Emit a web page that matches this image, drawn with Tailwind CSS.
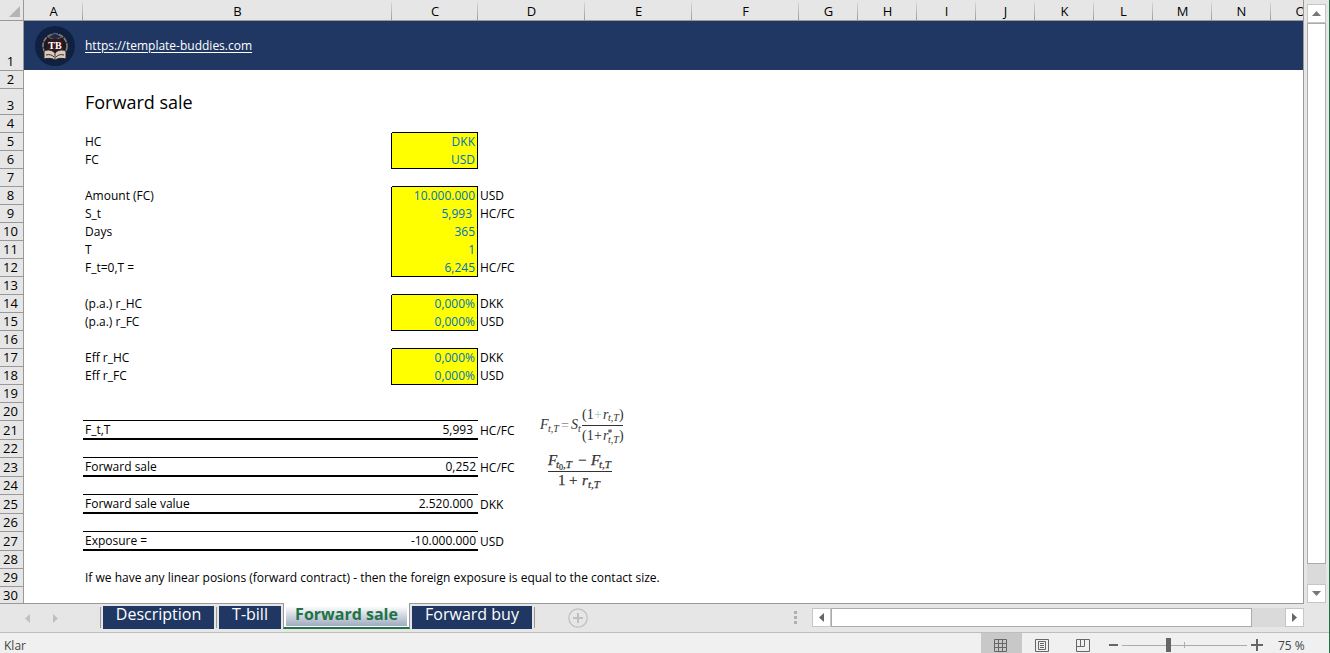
<!DOCTYPE html>
<html lang="da">
<head>
    <meta charset="UTF-8">
    <meta name="viewport" content="width=device-width, initial-scale=1.0">
    <title>Forward sale</title>
    <script src="https://cdn.jsdelivr.net/npm/@tailwindcss/browser@4"></script>
</head>
<body class="h-screen flex flex-col overflow-hidden bg-[#e6e6e6] border-r border-[#217346] font-['Open_Sans',sans-serif] text-black select-none">

    <div class="flex-1 min-h-0 flex">
        <!-- sheet -->
        <main class="relative flex-1 min-w-0 overflow-hidden bg-white border-r border-[#999]">
            <table class="table-fixed w-full min-w-[1330px] border-separate border-spacing-0 text-[12px] leading-4 whitespace-nowrap [&_th]:font-normal [&_th]:text-[13px] [&_th]:bg-[#e6e6e6] [&_th]:p-0 [&_th]:border-[#999] [&_tbody_th]:border-r [&_tbody_th]:border-b [&_tbody_th]:pr-[2px] [&_tbody_th]:pb-px [&_tbody_th]:align-bottom [&_thead_th]:border-b [&_thead_th]:pt-px [&_td]:px-[2px] [&_td]:pt-0 [&_td]:border-black [&_td]:align-bottom">
                <colgroup>
                    <col class="w-[24px]"><col class="w-[59px]"><col class="w-[309px]"><col class="w-[86px]">
                    <col class="w-[107px]"><col class="w-[107px]"><col class="w-[107px]">
                    <col span="8" class="w-[59px]"><col>
                </colgroup>
                <thead>
                    <tr class="h-[21px] [&>th+th]:bg-[linear-gradient(to_bottom,#d8d8d8,#999)] [&>th+th]:bg-[length:1px_19px] [&>th+th]:bg-[position:right_2px] [&>th+th]:bg-no-repeat">
                        <th class="border-r"><svg class="ml-[9px] mt-px w-[11px] h-[11px]" viewBox="0 0 11 11"><path d="M11 0v11H0z" fill="#b4b4b4"/></svg></th>
                        <th>A</th><th>B</th><th>C</th><th>D</th><th>E</th><th>F</th><th>G</th><th>H</th><th>I</th><th>J</th><th>K</th><th>L</th><th>M</th><th>N</th><th>O</th>
                    </tr>
                </thead>
                <tbody>
                    <tr class="h-[50px] [&>td]:bg-[#203764] [&>td]:border-b [&>td]:border-white!">
                        <th>1</th>
                        <td>
                            <svg class="ml-[9px] mb-1 w-10 h-10" viewBox="0 0 40 40">
                                <circle cx="20" cy="20" r="20" fill="#0f2040"/>
                                <circle cx="20" cy="20" r="12" fill="#161a26" stroke="#8d7f70" stroke-width="1.6" stroke-dasharray="5 1"/>
                                <path d="M13 11l7-4 7 4-7 3z" fill="#1b2c4c" stroke="#6b6663"/>
                                <path d="M12 13h16v12H12z" fill="#35161b"/>
                                <path d="M9 25c4-2 8-1 11 2 3-3 7-4 11-2v8c-4-1-8-1-11 1-3-2-7-2-11-1z" fill="#d8cbbb" stroke="#2b2425"/>
                                <path d="M20 27v6M11 29c4-1 6 0 8 2M29 29c-4-1-6 0-8 2" stroke="#3b302c" fill="none"/>
                                <text x="20" y="23" text-anchor="middle" font-family="Liberation Serif" font-weight="bold" font-size="10" fill="#fff">TB</text>
                            </svg>
                        </td>
                        <td colspan="14" class="align-middle!"><a href="https://template-buddies.com" class="text-white underline underline-offset-2">https://template-buddies.com</a></td>
                    </tr>
                    <tr class="h-[18px]"><th>2</th></tr>
                    <tr class="h-[26px]"><th>3</th><td></td><td class="text-[18px] leading-6 pb-px">Forward sale</td></tr>
                    <tr class="h-[18px]"><th>4</th><td></td><td></td><td class="border-b"></td></tr>
                    <tr class="h-[18px]"><th>5</th><td></td><td class="border-r pb-px">HC</td><td class="border-r pb-px bg-[#ff0] text-right text-[#0070c0]">DKK</td></tr>
                    <tr class="h-[18px]"><th>6</th><td></td><td class="border-r pb-px">FC</td><td class="border-r border-b bg-[#ff0] text-right text-[#0070c0]">USD</td></tr>
                    <tr class="h-[18px]"><th>7</th><td></td><td></td><td class="border-b"></td></tr>
                    <tr class="h-[18px]"><th>8</th><td></td><td class="border-r pb-px">Amount (FC)</td><td class="border-r pb-px bg-[#ff0] text-right text-[#0070c0]">10.000.000</td><td class="pb-px">USD</td></tr>
                    <tr class="h-[18px]"><th>9</th><td></td><td class="border-r pb-px">S_t</td><td class="border-r pb-px bg-[#ff0] text-right text-[#0070c0] pr-[5px]!">5,993</td><td class="pb-px">HC/FC</td></tr>
                    <tr class="h-[18px]"><th>10</th><td></td><td class="border-r pb-px">Days</td><td class="border-r pb-px bg-[#ff0] text-right text-[#0070c0]">365</td></tr>
                    <tr class="h-[18px]"><th>11</th><td></td><td class="border-r pb-px">T</td><td class="border-r pb-px bg-[#ff0] text-right text-[#0070c0]">1</td></tr>
                    <tr class="h-[18px]"><th>12</th><td></td><td class="border-r pb-px">F_t=0,T =</td><td class="border-r border-b bg-[#ff0] text-right text-[#0070c0]">6,245</td><td class="pb-px">HC/FC</td></tr>
                    <tr class="h-[18px]"><th>13</th><td></td><td></td><td class="border-b"></td></tr>
                    <tr class="h-[18px]"><th>14</th><td></td><td class="border-r pb-px">(p.a.) r_HC</td><td class="border-r pb-px bg-[#ff0] text-right text-[#0070c0]">0,000%</td><td class="pb-px">DKK</td></tr>
                    <tr class="h-[18px]"><th>15</th><td></td><td class="border-r pb-px">(p.a.) r_FC</td><td class="border-r border-b bg-[#ff0] text-right text-[#0070c0]">0,000%</td><td class="pb-px">USD</td></tr>
                    <tr class="h-[18px]"><th>16</th><td></td><td></td><td class="border-b"></td></tr>
                    <tr class="h-[18px]"><th>17</th><td></td><td class="border-r pb-px">Eff r_HC</td><td class="border-r pb-px bg-[#ff0] text-right text-[#0070c0]">0,000%</td><td class="pb-px">DKK</td></tr>
                    <tr class="h-[18px]"><th>18</th><td></td><td class="border-r pb-px">Eff r_FC</td><td class="border-r border-b bg-[#ff0] text-right text-[#0070c0]">0,000%</td><td class="pb-px">USD</td></tr>
                    <tr class="h-[18px]"><th>19</th></tr>
                    <tr class="h-[18px]"><th>20</th><td></td><td class="border-b"></td><td class="border-b"></td></tr>
                    <tr class="h-[19px]"><th>21</th><td></td><td class="border-b-2">F_t,T</td><td class="border-b-2 text-right pr-[5px]!">5,993</td><td class="pb-px">HC/FC</td></tr>
                    <tr class="h-[18px]"><th>22</th><td></td><td class="border-b"></td><td class="border-b"></td></tr>
                    <tr class="h-[19px]"><th>23</th><td></td><td class="border-b-2">Forward sale</td><td class="border-b-2 text-right">0,252</td><td class="pb-px">HC/FC</td></tr>
                    <tr class="h-[18px]"><th>24</th><td></td><td class="border-b"></td><td class="border-b"></td></tr>
                    <tr class="h-[19px]"><th>25</th><td></td><td class="border-b-2">Forward sale value</td><td class="border-b-2 text-right pr-[5px]!">2.520.000</td><td class="pb-px">DKK</td></tr>
                    <tr class="h-[18px]"><th>26</th><td></td><td class="border-b"></td><td class="border-b"></td></tr>
                    <tr class="h-[19px]"><th>27</th><td></td><td class="border-b-2">Exposure =</td><td class="border-b-2 text-right">-10.000.000</td><td class="pb-px">USD</td></tr>
                    <tr class="h-[18px]"><th>28</th></tr>
                    <tr class="h-[18px]"><th>29</th><td></td><td colspan="8" class="pb-px">If we have any linear posions (forward contract) - then the foreign exposure is equal to the contact size.</td></tr>
                    <tr class="h-[18px]"><th>30</th></tr>
                </tbody>
            </table>

            <!-- formulas floating over the cells -->
            <svg class="absolute left-[538px] top-[404px] w-[90px] h-[88px]" viewBox="0 0 90 88" font-family="Liberation Serif, serif" font-style="italic" fill="#333">
                <g font-size="14">
                    <text x="2" y="25">F</text><text x="10" y="28" font-size="10">t,T</text>
                    <text x="23" y="26" font-style="normal" fill="#888">=</text>
                    <text x="33" y="25">S</text><text x="40" y="28" font-size="10">t</text>
                    <text x="44" y="15" font-style="normal">(1</text><text x="56" y="15" font-style="normal" fill="#9fcfd3">+</text><text x="65" y="15">r</text><text x="70" y="17" font-size="10">t,T</text><text x="81" y="15" font-style="normal">)</text>
                    <text x="44" y="36" font-style="normal">(1</text><text x="56" y="36" font-style="normal">+</text><text x="65" y="36">r</text><path d="M72 25v4M70 26l4 2M74 26l-4 2" stroke="#333" stroke-width=".7"/><text x="70" y="39" font-size="10">t,T</text><text x="81" y="36" font-style="normal">)</text>
                    <path d="M44 21.5h41" stroke="#333"/>
                </g>
                <g font-size="15" stroke="#333" stroke-width=".25">
                    <text x="10" y="61">F</text><text x="18" y="64" font-size="11">t</text><text x="21" y="66" font-size="8" font-style="normal">0</text><text x="25" y="64" font-size="11">,T</text>
                    <text x="40" y="61" font-style="normal">−</text>
                    <text x="53" y="61">F</text><text x="61" y="64" font-size="11">t,T</text>
                    <path d="M10 67.5h64" stroke-width="1"/>
                    <text x="20" y="81" font-style="normal">1</text><text x="31" y="81" font-style="normal">+</text><text x="44" y="81">r</text><text x="50" y="84" font-size="11">t,T</text>
                </g>
            </svg>
        </main>

        <!-- vertical scroll bar -->
        <div class="w-[25px] pl-[3px] pr-[3px] pt-1 flex flex-col bg-[#e6e6e6]">
            <button type="button" aria-label="Scroll up" class="h-[19px] flex items-center justify-center bg-white border border-[#c6c6c6]"><svg class="w-[9px] h-[5px]" viewBox="0 0 9 5"><path d="M4.500 0L9 5H0z" fill="#777"/></svg></button>
            <div class="flex-1 bg-[#dadada] pb-5"><div class="h-full bg-white border border-[#ababab]"></div></div>
            <button type="button" aria-label="Scroll down" class="h-[19px] flex items-center justify-center bg-white border border-[#c6c6c6]"><svg class="w-[9px] h-[5px]" viewBox="0 0 9 5"><path d="M0 0h9L4.500 5z" fill="#777"/></svg></button>
        </div>
    </div>

    <!-- sheet tabs -->
    <div class="h-[29px] flex items-start">
        <div class="h-[26px] w-[283px] flex items-start border-t border-[#999] text-[16px] text-white">
            <div class="w-[100px] h-full pt-1 pl-6 flex items-center gap-[23px]">
                <svg class="w-[6px] h-[9px]" viewBox="0 0 6 9"><path d="M6 0v9L1 4.500z" fill="#c0c0c0"/></svg>
                <svg class="w-[6px] h-[9px]" viewBox="0 0 6 9"><path d="M0 0v9l5-4.500z" fill="#c0c0c0"/></svg>
            </div>
            <div class="mt-[3px] h-[21px] w-px bg-[#999]"></div>
            <button type="button" class="mt-[2px] ml-[2px] w-[111px] h-[23px] leading-4 pb-[7px] bg-[#203764]">Description</button>
            <div class="mt-[3px] ml-[2px] h-[21px] w-px bg-[#999]"></div>
            <button type="button" class="mt-[2px] ml-[2px] w-[62px] h-[23px] leading-4 pb-[7px] bg-[#203764]">T-bill</button>
        </div>
        <button type="button" class="w-[127px] h-[26px] bg-white border-x border-x-[#999] border-b-2 border-b-[#217346] px-[2px] pt-[3px] pb-px text-[16px] font-bold text-[#217346]"><span class="block h-5 leading-4 bg-linear-to-b from-white to-[#a0abc0]">Forward sale</span></button>
        <div class="flex-1 h-[26px] flex items-start border-t border-[#999] text-[16px] text-white">
            <button type="button" class="mt-[2px] ml-[2px] w-[120px] h-[23px] leading-4 pb-[7px] bg-[#203764]">Forward buy</button>
            <div class="mt-[3px] ml-[2px] h-[21px] w-px bg-[#999]"></div>
            <button type="button" aria-label="New sheet" class="mt-1 ml-[33px]"><svg class="w-5 h-5" viewBox="0 0 20 20" fill="none" stroke="#c0c0c0"><circle cx="10" cy="10" r="9.200" stroke-width="1.300"/><path d="M10 5v10M5 10h10" stroke-width="2"/></svg></button>
        </div>
        <div class="w-[519px] h-[26px] border-t border-[#999] flex items-start pt-1">
            <svg class="mt-[3px] ml-[9px] w-[3px] h-[13px]" viewBox="0 0 3 13" fill="#b0b0b0"><path d="M0 0h3v3H0zM0 5h3v3H0zM0 10h3v3H0z"/></svg>
            <button type="button" aria-label="Scroll left" class="ml-[15px] w-[19px] h-[19px] flex items-center justify-center bg-white border border-[#c6c6c6]"><svg class="w-[5px] h-[9px]" viewBox="0 0 5 9"><path d="M5 0v9L0 4.500z" fill="#666"/></svg></button>
            <div class="flex-1 h-[19px] pr-[33px] bg-[#dadada]"><div class="h-full bg-white border border-[#ababab]"></div></div>
            <button type="button" aria-label="Scroll right" class="w-[19px] h-[19px] flex items-center justify-center bg-white border border-[#c6c6c6]"><svg class="w-[5px] h-[9px]" viewBox="0 0 5 9"><path d="M0 0v9l5-4.500z" fill="#666"/></svg></button>
        </div>
        <div class="w-[25px]"></div>
    </div>

    <!-- status bar -->
    <footer class="h-[21px] flex items-start bg-[#f0f0f0] border-t border-[#bebebe] text-[12px] text-[#444]">
        <span class="flex-1 pl-1 pt-[5px] leading-4">Klar</span>
        <button type="button" aria-label="Normal view" class="w-[41px] h-5 pt-[5px] pl-[13px] bg-[#c8c8c8]"><svg class="w-[13px] h-[13px]" viewBox="0 0 13 13" fill="none" stroke="#666"><path d="M.5.5h12v12H.5zM4.500 0v13M8.500 0v13M0 4.500h13M0 8.500h13"/></svg></button>
        <button type="button" aria-label="Page layout" class="w-[41px] h-5 pt-[5px] pl-[13px]"><svg class="w-[14px] h-[13px]" viewBox="0 0 14 13" fill="none" stroke="#666"><path d="M.5.5h13v12H.5zM3.500 2.500h7v8h-7zM5 4.500h4M5 6.500h4M5 8.500h4"/></svg></button>
        <button type="button" aria-label="Page break preview" class="w-[41px] h-5 pt-[5px] pl-[13px]"><svg class="w-[14px] h-[13px]" viewBox="0 0 14 13" fill="none" stroke="#666"><path d="M.5.5h13v12H.5zM.5 7.500h8v-7M4.500 0v7"/></svg></button>
        <button type="button" aria-label="Zoom out" class="ml-[5px] h-5 pt-1"><svg class="w-[9px] h-4" viewBox="0 0 9 16"><path d="M0 7h9v2H0z" fill="#666"/></svg></button>
        <div class="relative ml-1 w-[125px] h-5 pt-[5px]">
            <span class="absolute left-[62px] top-[9px] w-px h-[6px] bg-[#b0b0b0]"></span>
            <input type="range" aria-label="Zoom" min="0" max="100" value="37" class="relative block w-full h-[14px] appearance-none bg-[linear-gradient(#ababab,#ababab)] bg-[length:100%_1px] bg-center bg-no-repeat [&::-webkit-slider-thumb]:appearance-none [&::-webkit-slider-thumb]:w-[5px] [&::-webkit-slider-thumb]:h-[14px] [&::-webkit-slider-thumb]:bg-[#666]">
        </div>
        <button type="button" aria-label="Zoom in" class="ml-1 h-5 pt-1"><svg class="w-[12px] h-4" viewBox="0 0 12 16"><path d="M0 7h5V2h2v5h5v2H7v5H5V9H0z" fill="#666"/></svg></button>
        <span class="ml-[15px] w-[51px] pt-[5px] leading-4">75 %</span>
    </footer>
</body>
</html>
